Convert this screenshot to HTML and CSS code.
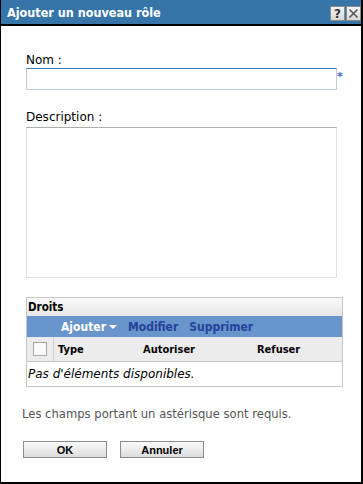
FILE: index.html
```html
<!DOCTYPE html>
<html lang="fr">
<head>
<meta charset="utf-8">
<title>Ajouter un nouveau rôle</title>
<link rel="stylesheet" href="styles.css">
</head>
<body>
<div class="window">
  <div class="titlebar">
    <span class="title">Ajouter un nouveau rôle</span>
    <div class="tb-buttons">
      <span class="tb-btn">?</span>
      <span class="tb-btn">
        <svg width="11" height="11" viewBox="0 0 11 11"><path d="M1.5 1.5 L9.5 9.5 M9.5 1.5 L1.5 9.5" stroke="#555" stroke-width="1.6" fill="none"/></svg>
      </span>
    </div>
  </div>
  <div class="content">
    <label class="label label-nom">Nom :</label>
    <div class="input-row">
      <div class="input"></div>
      <span class="req">*</span>
    </div>
    <label class="label label-desc">Description :</label>
    <div class="textarea"></div>

    <div class="grid">
      <div class="grid-title">Droits</div>
      <div class="grid-toolbar">
        <span class="tool tool-add">Ajouter <span class="caret"></span></span>
        <span class="tool">Modifier</span>
        <span class="tool">Supprimer</span>
      </div>
      <div class="grid-head">
        <div class="cell-check"><span class="checkbox"></span></div>
        <div class="col col-type">Type</div>
        <div class="col col-allow">Autoriser</div>
        <div class="col col-deny">Refuser</div>
      </div>
      <div class="grid-empty">Pas d'éléments disponibles.</div>
    </div>

    <p class="note">Les champs portant un astérisque sont requis.</p>
    <div class="buttons">
      <button class="btn">OK</button>
      <button class="btn">Annuler</button>
    </div>
  </div>
</div>
</body>
</html>
```
FILE: styles.css
```css
html, body {
  margin: 0;
  padding: 0;
  background: #fff;
}
.window {
  box-sizing: border-box;
  width: 363px;
  height: 484px;
  border-left: 1px solid #000;
  border-right: 2px solid #000;
  border-bottom: 2px solid #000;
  font-family: "DejaVu Sans", Verdana, sans-serif;
  display: flex;
  flex-direction: column;
}
.titlebar {
  height: 24px;
  background: #3775a9;
  border-bottom: 2px solid #000;
  display: flex;
  align-items: center;
  justify-content: space-between;
  padding: 0 0 0 6px;
}
.title {
  color: #fff;
  font-family: "DejaVu Sans Condensed", "DejaVu Sans", sans-serif;
  font-size: 12.5px;
  font-weight: bold;
}
.tb-buttons {
  display: flex;
  gap: 1px;
  margin-top: 3px;
}
.tb-btn {
  width: 15px;
  height: 15px;
  background: linear-gradient(#f4f4f4, #d8d8d8);
  border: 1px solid #8a8a8a;
  box-sizing: border-box;
  display: flex;
  align-items: center;
  justify-content: center;
  font-size: 12px;
  font-weight: bold;
  color: #333;
}
.content {
  padding: 27px 0 0 25px;
  display: flex;
  flex-direction: column;
}
.label {
  font-size: 12px;
  color: #000;
  line-height: 14px;
}
.input-row {
  display: flex;
  align-items: flex-start;
  margin-top: 1px;
}
.input {
  box-sizing: border-box;
  width: 311px;
  height: 22px;
  border: 1px solid #b8d0e4;
  border-top-color: #3f7fb5;
}
.req {
  color: #3a6ac8;
  font-size: 11px;
  font-weight: bold;
  line-height: 11px;
  margin: 3px 0 0 0;
}
.label-desc {
  margin-top: 20px;
}
.textarea {
  box-sizing: border-box;
  width: 311px;
  height: 151px;
  margin-top: 3px;
  border: 1px solid #dde2ea;
  border-top-color: #adadad;
}
.grid {
  box-sizing: border-box;
  width: 317px;
  margin-top: 19px;
  border: 1px solid #c6c6c6;
}
.grid-title {
  height: 18px;
  line-height: 18px;
  background: linear-gradient(#fafafa, #e6e6e6);
  font-family: "DejaVu Sans Condensed", "DejaVu Sans", sans-serif;
  font-size: 11.5px;
  font-weight: bold;
  color: #000;
  padding-left: 1px;
}
.grid-toolbar {
  height: 21px;
  background: #6895cb;
  display: flex;
  align-items: center;
  padding-left: 34px;
  gap: 11px;
  font-family: "DejaVu Sans Condensed", "DejaVu Sans", sans-serif;
  font-size: 12px;
  font-weight: bold;
}
.tool {
  color: #24429a;
}
.tool-add {
  color: #fff;
  display: inline-flex;
  align-items: center;
}
.caret {
  display: inline-block;
  width: 0;
  height: 0;
  border-left: 4px solid transparent;
  border-right: 4px solid transparent;
  border-top: 4px solid #fff;
  margin-left: 3px;
}
.grid-head {
  height: 24px;
  background: #ececec;
  border-bottom: 1px solid #c6c6c6;
  display: flex;
  align-items: center;
  font-family: "DejaVu Sans Condensed", "DejaVu Sans", sans-serif;
  font-size: 11px;
  font-weight: bold;
  color: #000;
}
.cell-check {
  width: 26px;
  height: 100%;
  border-right: 1px solid #d0d0d0;
  display: flex;
  align-items: center;
  justify-content: center;
}
.checkbox {
  width: 12px;
  height: 12px;
  background: #fafafa;
  border: 1px solid #a8a8a8;
}
.col {
  padding-left: 4px;
}
.col-type { width: 81px; }
.col-allow { width: 110px; }
.grid-empty {
  height: 24px;
  line-height: 24px;
  font-size: 12px;
  font-style: italic;
  padding-left: 1px;
}
.note {
  margin: 20px 0 0 -4px;
  font-size: 11.6px;
  color: #555;
}
.buttons {
  display: flex;
  gap: 13px;
  margin: 20px 0 0 -3px;
}
.btn {
  width: 84px;
  height: 17px;
  padding: 0;
  border: 1px solid #8c8c8c;
  background: linear-gradient(#fbfbfb, #dcdcdc);
  font-family: "Liberation Sans", Arial, sans-serif;
  font-size: 11px;
  font-weight: bold;
  color: #000;
}
```
